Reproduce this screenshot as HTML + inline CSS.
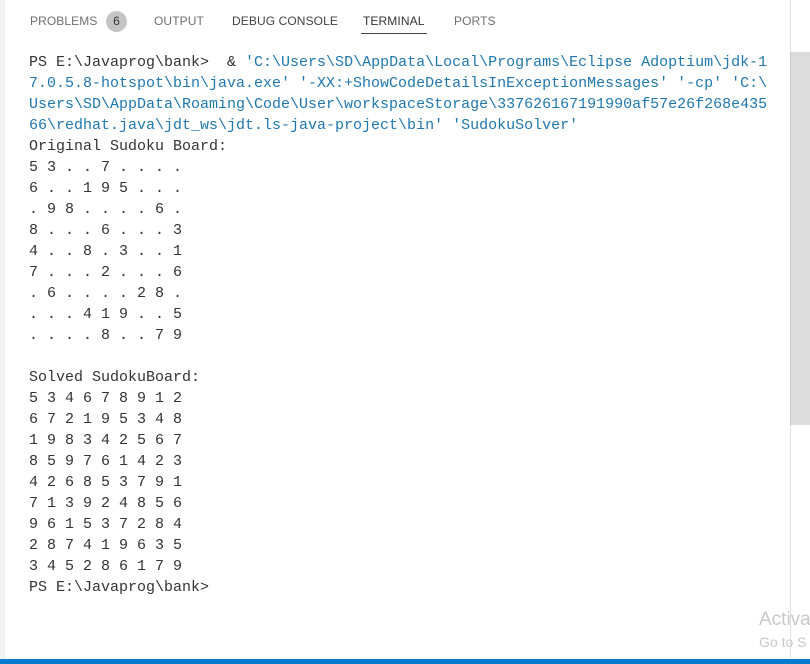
<!DOCTYPE html>
<html><head><meta charset="utf-8"><style>
html,body{margin:0;padding:0;}
body{width:810px;height:664px;position:relative;overflow:hidden;background:#fff;font-family:"Liberation Sans",sans-serif;}
.lstrip{position:absolute;left:0;top:0;width:5px;height:664px;background:#f3f3f3;}
.tab{position:absolute;top:14px;font-size:12px;color:#6f6f6f;letter-spacing:0.1px;}
.badge{position:absolute;left:106px;top:11px;width:21px;height:21px;border-radius:50%;background:#c4c4c4;color:#333;font-size:12px;text-align:center;line-height:21px;}
.ul{position:absolute;left:361px;top:33px;width:66px;height:1px;background:#424242;}
pre{position:absolute;left:29px;top:52px;margin:0;font-family:"Liberation Mono",monospace;font-size:15px;line-height:21px;color:#333;}
.s{color:#1f77ad;}
.vline{position:absolute;left:790px;top:0;width:1px;height:664px;background:#e0e0e0;}
.sb{position:absolute;left:790px;top:52px;width:20px;height:373px;background:#dcdcdc;border-left:1px solid #c8c8c8;}
.sbtop{position:absolute;left:808px;top:0;width:2px;height:664px;background:#e5e5e5;}
.blue{position:absolute;left:0;top:659px;width:810px;height:5px;background:#007acc;}
.act{position:absolute;left:759px;top:609px;font-size:19px;color:#c8c8c8;}
.go{position:absolute;left:759px;top:634px;font-size:14px;color:#c8c8c8;}
</style></head><body>
<div class="lstrip"></div>
<div class="tab" style="left:30px">PROBLEMS</div>
<div class="badge">6</div>
<div class="tab" style="left:154px">OUTPUT</div>
<div class="tab" style="left:232px;color:#424242">DEBUG CONSOLE</div>
<div class="tab" style="left:363px;color:#333">TERMINAL</div>
<div class="tab" style="left:454px">PORTS</div>
<div class="ul"></div>
<pre>PS E:\Javaprog\bank>  &amp; <span class="s">'C:\Users\SD\AppData\Local\Programs\Eclipse Adoptium\jdk-1
7.0.5.8-hotspot\bin\java.exe' '-XX:+ShowCodeDetailsInExceptionMessages' '-cp' 'C:\
Users\SD\AppData\Roaming\Code\User\workspaceStorage\337626167191990af57e26f268e435
66\redhat.java\jdt_ws\jdt.ls-java-project\bin' 'SudokuSolver'</span>
Original Sudoku Board:
5 3 . . 7 . . . .
6 . . 1 9 5 . . .
. 9 8 . . . . 6 .
8 . . . 6 . . . 3
4 . . 8 . 3 . . 1
7 . . . 2 . . . 6
. 6 . . . . 2 8 .
. . . 4 1 9 . . 5
. . . . 8 . . 7 9

Solved SudokuBoard:
5 3 4 6 7 8 9 1 2
6 7 2 1 9 5 3 4 8
1 9 8 3 4 2 5 6 7
8 5 9 7 6 1 4 2 3
4 2 6 8 5 3 7 9 1
7 1 3 9 2 4 8 5 6
9 6 1 5 3 7 2 8 4
2 8 7 4 1 9 6 3 5
3 4 5 2 8 6 1 7 9
PS E:\Javaprog\bank></pre>
<div class="vline"></div>
<div class="sb"></div>
<div class="act">Activa</div>
<div class="go">Go to S</div>
<div class="blue"></div>
</body></html>
